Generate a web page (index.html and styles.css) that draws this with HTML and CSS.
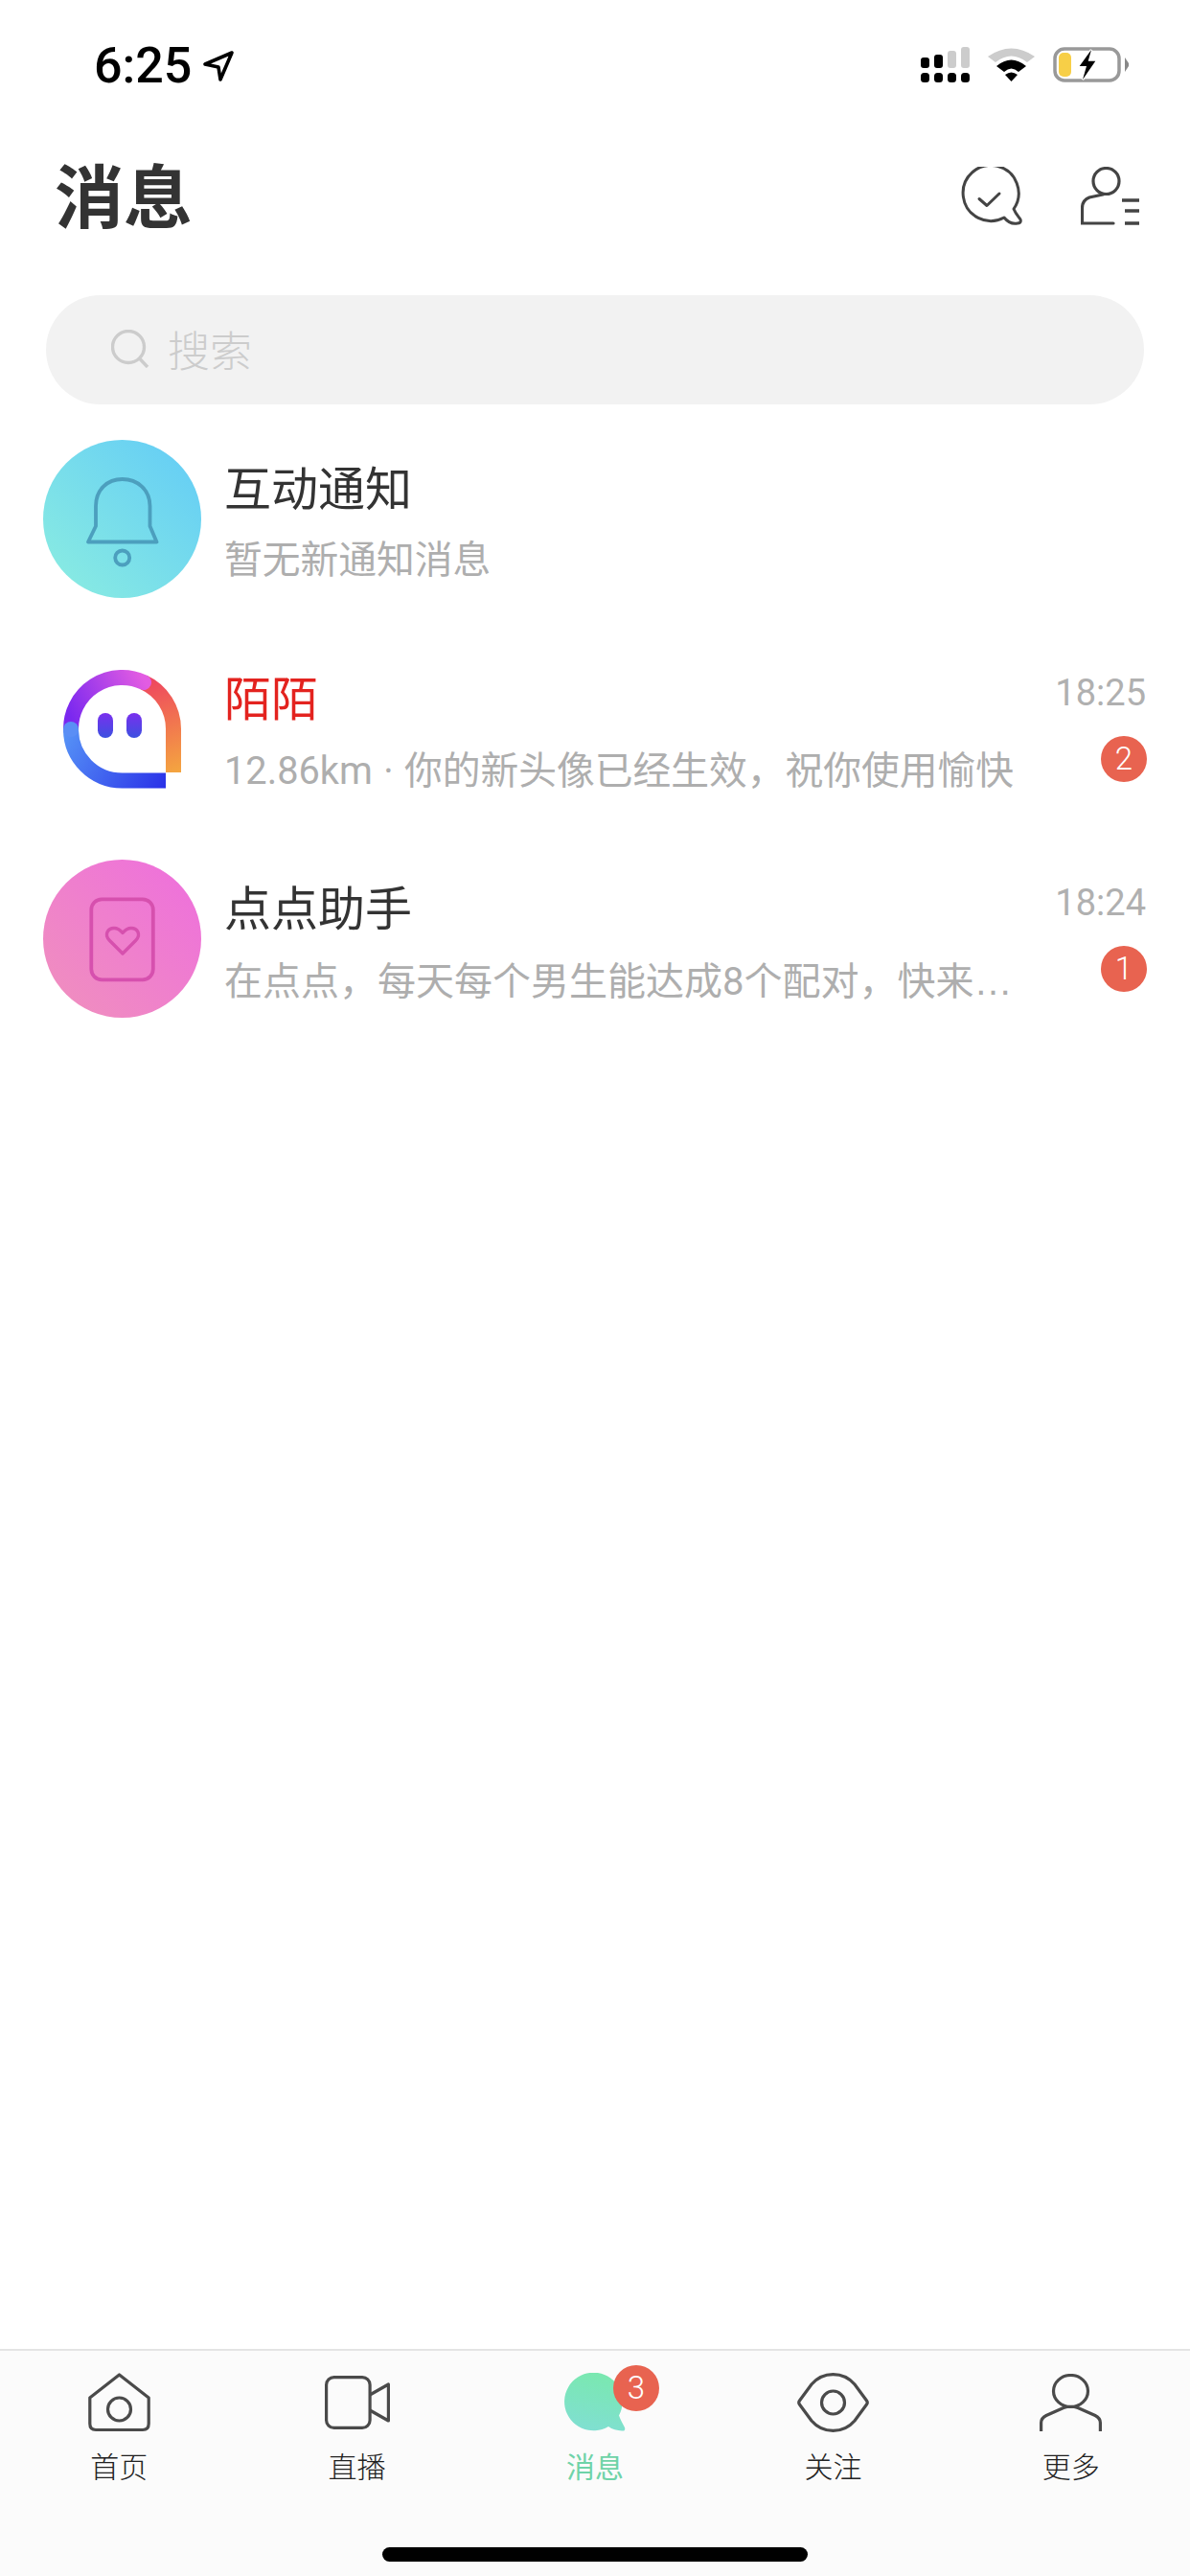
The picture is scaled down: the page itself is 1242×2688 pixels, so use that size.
FILE: index.html
```html
<!DOCTYPE html>
<html lang="zh-CN">
<head>
<meta charset="utf-8">
<title>消息</title>
<link rel="stylesheet" href="styles.css">
</head>
<body>
<div class="page">
  <div class="status">
    <div class="status-left">
      <span class="clock">6:25</span>
      <svg class="loc" width="34" height="36" viewBox="0 0 34 36"><path d="M31 4 3 16 17 19 19 32Z" fill="none" stroke="#000" stroke-width="3.6" stroke-linejoin="round"/></svg>
    </div>
    <div class="status-right">
      <svg width="51" height="37" viewBox="0 0 51 37">
        <g fill="#000"><rect x="0" y="27" width="9" height="10" rx="3.5"/><rect x="14" y="27" width="9" height="10" rx="3.5"/><rect x="28" y="27" width="9" height="10" rx="3.5"/><rect x="42" y="27" width="9" height="10" rx="3.5"/><rect x="0" y="11" width="9" height="11" rx="3"/><rect x="14" y="8" width="9" height="14" rx="3"/></g>
        <g fill="#ccc"><rect x="28" y="4" width="9" height="18" rx="3"/><rect x="42" y="0" width="9" height="22" rx="3"/></g>
      </svg>
      <svg width="49" height="36" viewBox="0 0 49 36">
        <path d="M0 10Q24.500-7 49 10L41 16Q24.500 3 8 16Z" fill="#ccc"/>
        <path d="M9 20Q24.500 7 40 20L32 26Q24.500 19 17 26Z" fill="#000"/>
        <path d="M18 29Q24.500 24 31 29L24.500 36Z" fill="#000"/>
      </svg>
      <svg width="80" height="37" viewBox="0 0 80 37">
        <rect x="2" y="2" width="67" height="33" rx="10" fill="#fff" stroke="#999" stroke-width="3.500"/>
        <rect x="6" y="6" width="13" height="25" rx="5" fill="#f7cf47"/>
        <path d="M40 3 27.700 20 35 20 31 34 44.300 14.700 36.700 14.700Z" fill="#000" stroke="#fff" stroke-width="2.500" paint-order="stroke"/>
        <path d="M75 11 79 17V20L75 26Z" fill="#888"/>
      </svg>
    </div>
  </div>

  <header class="head">
    <h1 class="head-title">消息</h1>
    <div class="head-actions">
      <svg width="66" height="62" viewBox="0 0 66 62" fill="none" stroke="#444" stroke-width="3" stroke-linecap="round" stroke-linejoin="round">
        <path d="M46 53A29 29 0 1 1 56 44C58 49 61 52 63 55 64 58 62 59 60 59 55 60 50 58 46 53Z"/>
        <path d="M20 33.500 28 40.500 41 28"/>
      </svg>
      <svg width="62" height="62" viewBox="0 0 62 62" fill="none" stroke="#444" stroke-width="3.200" stroke-linecap="round">
        <circle cx="26.500" cy="15" r="13.500"/>
        <path d="M23 29 9 32C4 34 1.500 37 1.500 43V59H34"/>
        <path d="M43 35H61M46 46H61M46 59H61" stroke-width="3.400" stroke-linecap="butt"/>
      </svg>
    </div>
  </header>

  <div class="search">
    <svg width="40" height="40" viewBox="0 0 40 40" fill="none" stroke="#ccc" stroke-width="3.400"><circle cx="18" cy="18" r="16.500"/><path d="M29.500 30 38 39"/></svg>
    <span class="search-text">搜索</span>
  </div>

  <main class="list">
    <article class="row row-notice">
      <div class="avatar">
        <svg width="165" height="165" viewBox="0 0 165 165">
          <defs><linearGradient id="gBell" x1="0" y1="1" x2="1" y2="0"><stop offset="0" stop-color="#8ceee0"/><stop offset="1" stop-color="#62cbf7"/></linearGradient></defs>
          <circle cx="82.500" cy="82.500" r="82.500" fill="url(#gBell)"/>
          <path d="M55 90V69C55 52 67 41 82.700 41S111.500 52 111.500 69V90L118.500 106.500H47Z" fill="none" stroke="#4c9fbe" stroke-width="3.800" stroke-linejoin="round"/>
          <circle cx="82.700" cy="123" r="7.500" fill="none" stroke="#4c9fbe" stroke-width="3.800"/>
        </svg>
      </div>
      <div class="body">
        <div class="line-top"><h2 class="name">互动通知</h2></div>
        <div class="line-bottom"><p class="sub">暂无新通知消息</p></div>
      </div>
    </article>

    <article class="row">
      <div class="avatar">
        <svg width="165" height="165" viewBox="-21 -21 165 165" fill="none" stroke-width="16">
          <defs>
            <linearGradient id="gBlue" gradientUnits="userSpaceOnUse" x1="8" y1="60" x2="107" y2="118"><stop offset="0" stop-color="#5590f6"/><stop offset="1" stop-color="#2b33e8"/></linearGradient>
            <linearGradient id="gRed" gradientUnits="userSpaceOnUse" x1="84" y1="9" x2="115" y2="107"><stop offset="0" stop-color="#ee4460"/><stop offset="1" stop-color="#f4a440"/></linearGradient>
            <linearGradient id="gPurple" gradientUnits="userSpaceOnUse" x1="8" y1="50" x2="84" y2="10"><stop offset="0" stop-color="#7a28ef"/><stop offset="1" stop-color="#e25ce2"/></linearGradient>
            <linearGradient id="gEye" x1="0" y1="0" x2="0" y2="1"><stop offset="0" stop-color="#7a30ee"/><stop offset="1" stop-color="#3c50e0"/></linearGradient>
          </defs>
          <path d="M84 13A53.500 53.500 0 0 1 115 62V107" stroke="url(#gRed)"/>
          <path d="M8 62A53.500 53.500 0 0 1 84 13" stroke="url(#gPurple)" stroke-linecap="round"/>
          <path d="M8 62A53.500 53.500 0 0 0 61.500 115.500H107" stroke="url(#gBlue)"/>
          <circle cx="8" cy="62" r="8" fill="#5a8ef5"/>
          <rect x="36" y="45" width="16" height="26" rx="8" fill="url(#gEye)"/>
          <rect x="66" y="45" width="16" height="26" rx="8" fill="url(#gEye)"/>
        </svg>
      </div>
      <div class="body">
        <div class="line-top"><h2 class="name name-red">陌陌</h2><time class="time">18:25</time></div>
        <div class="line-bottom"><p class="sub">12.86km · 你的新头像已经生效，祝你使用愉快</p><span class="badge">2</span></div>
      </div>
    </article>

    <article class="row">
      <div class="avatar">
        <svg width="165" height="165" viewBox="0 0 165 165">
          <defs><linearGradient id="gPink" x1="0" y1="1" x2="1" y2="0"><stop offset="0" stop-color="#f091bc"/><stop offset="1" stop-color="#ee6ede"/></linearGradient></defs>
          <circle cx="82.500" cy="82.500" r="82.500" fill="url(#gPink)"/>
          <rect x="50.300" y="41.300" width="64.500" height="84" rx="11" fill="none" stroke="#d650ae" stroke-width="3.800"/>
          <path d="M83 98 69.500 84.500C63 78 68 71.500 74 71.500 78 71.500 81 74 83 76.500 85 74 88 71.500 92 71.500 98 71.500 103 78 96.500 84.500Z" fill="none" stroke="#d650ae" stroke-width="3.400" stroke-linejoin="round"/>
        </svg>
      </div>
      <div class="body">
        <div class="line-top"><h2 class="name">点点助手</h2><time class="time">18:24</time></div>
        <div class="line-bottom"><p class="sub sub-long">在点点，每天每个男生能达成8个配对，快来<span class="ell">…</span></p><span class="badge">1</span></div>
      </div>
    </article>
  </main>

  <footer class="bar">
    <nav class="tabs">
      <a class="tab">
        <span class="tab-icon">
          <svg width="65" height="62" viewBox="0 0 65 62" fill="none" stroke="#4a4a4a" stroke-width="3.200" stroke-linejoin="round"><path d="M32.500 2 1.800 26V53C1.800 57 4 59.500 8 59.500H57C61 59.500 63.200 57 63.200 53V26Z"/><circle cx="32.500" cy="38" r="12"/></svg>
        </span>
        <span class="tab-label">首页</span>
      </a>
      <a class="tab">
        <span class="tab-icon">
          <svg width="68" height="56" viewBox="0 0 68 56" fill="none" stroke="#4a4a4a" stroke-width="3.200" stroke-linejoin="round"><rect x="1.600" y="1.600" width="45.500" height="52.800" rx="8"/><path d="M47 20 66.400 9V47L47 36"/></svg>
        </span>
        <span class="tab-label">直播</span>
      </a>
      <a class="tab tab-on">
        <span class="tab-icon">
          <svg width="64" height="62" viewBox="0 0 64 62"><defs><linearGradient id="gTab" x1="0.500" y1="0" x2="0.300" y2="1"><stop offset="0" stop-color="#7ae8b0"/><stop offset="1" stop-color="#80dfd2"/></linearGradient></defs><path d="M46 56A30.300 30.300 0 1 1 57 44.500C58.500 49 61 53 63 57 64 60 62 61 60 60.500 55 60 50 59 46 56Z" fill="url(#gTab)"/></svg>
          <span class="tab-badge">3</span>
        </span>
        <span class="tab-label">消息</span>
      </a>
      <a class="tab">
        <span class="tab-icon">
          <svg width="75" height="62" viewBox="0 0 75 62" fill="none" stroke="#4a4a4a" stroke-width="3.200" stroke-linejoin="round"><path d="M2.500 29 15 12C21 5 29 1.600 37.500 1.600S54 5 60 12L72.500 29Q74 31 72.500 33L60 50C54 57 46 60.400 37.500 60.400S21 57 15 50L2.500 33Q1 31 2.500 29Z"/><circle cx="37.500" cy="31" r="12"/></svg>
        </span>
        <span class="tab-label">关注</span>
      </a>
      <a class="tab">
        <span class="tab-icon">
          <svg width="65" height="60" viewBox="0 0 65 60" fill="none" stroke="#4a4a4a" stroke-width="3.200"><ellipse cx="32.500" cy="18" rx="18" ry="16.500"/><path d="M1.600 60V51C1.600 47 4 45 7 43.500L25 35.500Q32.500 33 40 35.500L58 43.500C61 45 63.400 47 63.400 51V60"/></svg>
        </span>
        <span class="tab-label">更多</span>
      </a>
    </nav>
    <div class="home-bar"></div>
  </footer>
</div>
</body>
</html>
```
FILE: styles.css
```css
* { box-sizing: border-box; }
html, body { margin: 0; padding: 0; background: #fff; }
body { font-family: Roboto, "Noto Sans CJK SC", sans-serif; }
.page { width: 1242px; height: 2688px; display: flex; flex-direction: column; overflow: hidden; }

.status { height: 120px; padding: 49px 63px 0 98px; display: flex; justify-content: space-between; align-items: flex-start; }
.status-left { display: flex; align-items: center; height: 40px; margin-top: 0; gap: 11px; }
.clock { font-size: 52px; line-height: 40px; font-weight: 500; color: #000; }
.status-right { display: flex; align-items: flex-start; gap: 19px; }
.status-right svg { display: block; }

.head { height: 170px; padding: 0 52px 0 57px; display: flex; justify-content: space-between; align-items: center; }
.head-title { margin: 6px 0 0; font-size: 72px; line-height: 100px; font-weight: 700; color: #333; }
.head-actions { display: flex; align-items: center; gap: 60px; }
.head-actions svg { display: block; }

.search { margin: 18px 48px 0; height: 114px; border-radius: 57px; background: #f2f2f2; display: flex; align-items: center; padding-left: 68px; gap: 19px; }
.search svg { display: block; margin-top: -2px; }
.search-text { margin-top: 6px; font-size: 44px; line-height: 60px; color: #ccc; font-weight: 300; }

.list { flex: 1; margin-top: 10px; }
.row { height: 219px; padding: 0 46px 0 45px; display: flex; align-items: center; gap: 24px; }
.avatar { width: 165px; height: 165px; flex: none; }
.avatar svg { display: block; }
.body { flex: 1; min-width: 0; height: 219px; padding-top: 50px; }
.line-top { height: 60px; display: flex; justify-content: space-between; align-items: flex-start; }
.line-bottom { margin-top: 19px; height: 50px; display: flex; justify-content: space-between; align-items: flex-start; }
.row-notice .line-bottom { margin-top: 18px; }
.name { margin: 0; font-size: 49px; line-height: 60px; font-weight: 400; color: #333; }
.name-red { color: #e3231f; }
.sub { margin: 0; font-size: 39.75px; line-height: 50px; font-weight: 400; color: #aeaeae; white-space: nowrap; overflow: hidden; word-spacing: 1.5px; }
.sub-long { font-size: 40px; }
.ell { font-family: "Liberation Sans", sans-serif; }
.time { font-size: 38px; line-height: 44px; font-weight: 400; color: #b0b0b0; }
.badge { width: 48px; height: 48px; margin: -12px -1px 0 0; border-radius: 50%; background: #e86350; color: #fff; font-size: 33px; line-height: 48px; text-align: center; font-weight: 300; flex: none; }

.bar { height: 237px; background: #fbfbfb; border-top: 2px solid #e4e4e4; display: flex; flex-direction: column; }
.tabs { display: grid; grid-template-columns: repeat(5, 1fr); padding-top: 22px; }
.tab { display: flex; flex-direction: column; align-items: center; text-decoration: none; color: #222; }
.tab-icon { position: relative; height: 64px; display: flex; align-items: center; justify-content: center; }
.tab-icon svg { display: block; }
.tab-label { margin-top: 14px; font-size: 30px; line-height: 44px; font-weight: 300; }
.tab-on { color: #6fd3a8; }
.tab-on .tab-label { font-weight: 400; }
.tab-badge { position: absolute; left: 51px; top: -7px; width: 48px; height: 48px; border-radius: 50%; background: #e86350; color: #fff; font-size: 33px; line-height: 48px; text-align: center; font-weight: 300; }
.home-bar { width: 444px; height: 15px; margin: 61px auto 0; border-radius: 8px; background: #000; }
```
